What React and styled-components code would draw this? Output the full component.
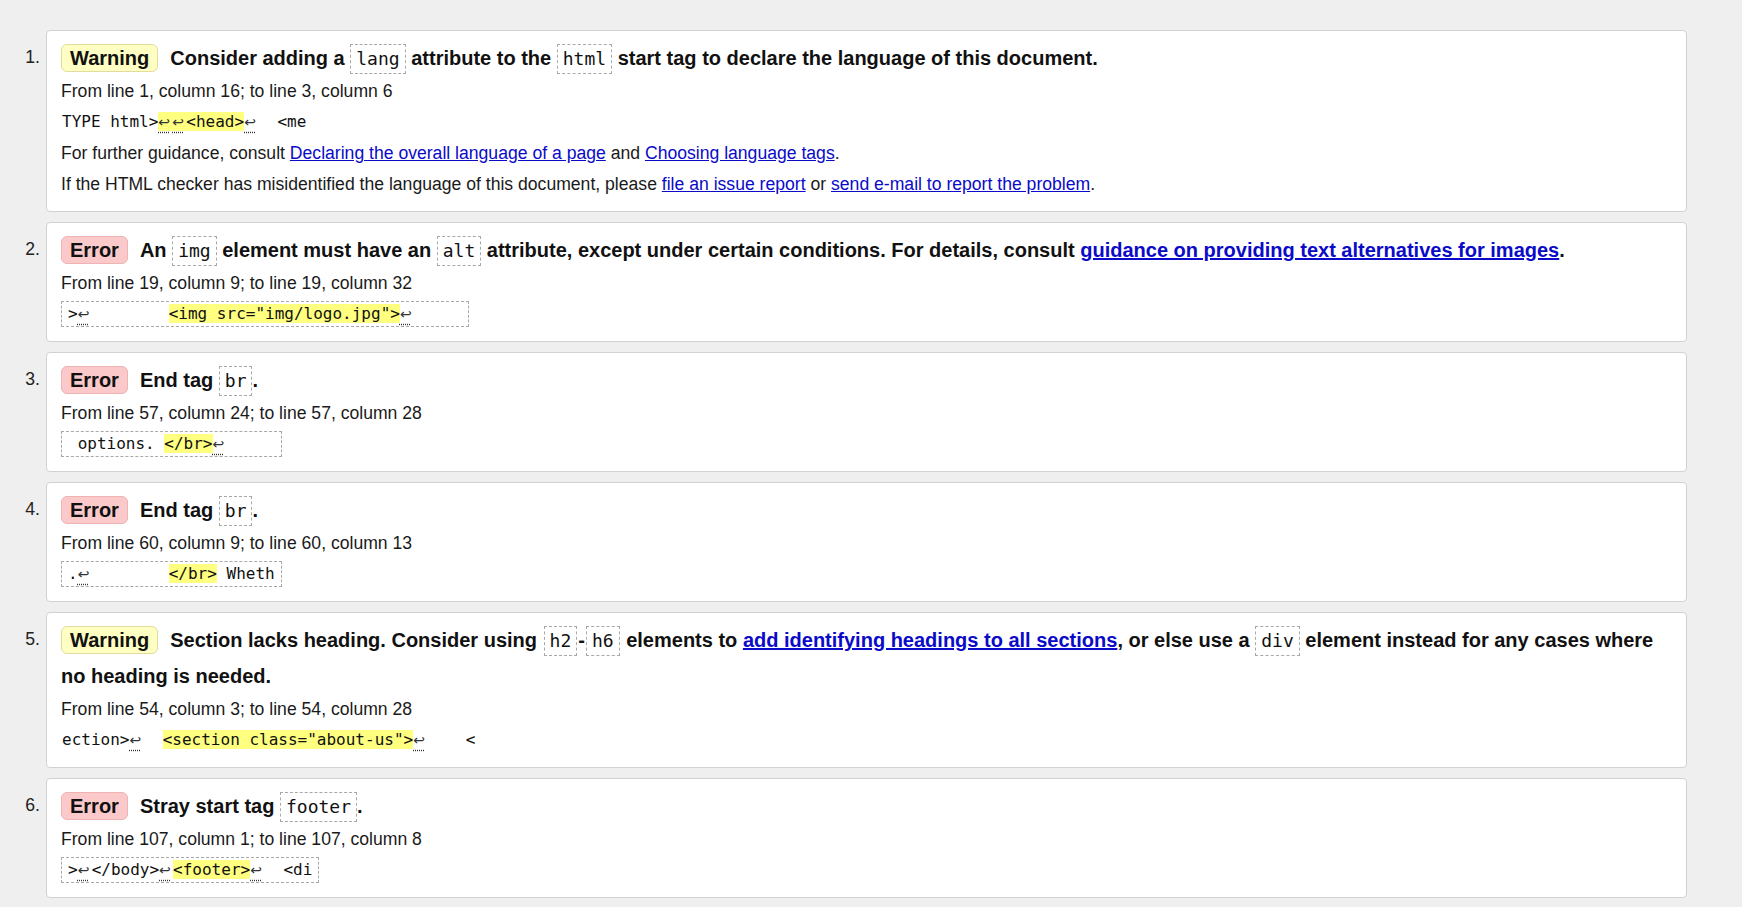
import React from 'react';
import styled, { createGlobalStyle, css } from 'styled-components';

const GlobalStyle = createGlobalStyle`
  html, body {
    margin: 0;
    padding: 0;
    overflow: hidden;
  }
  body {
    background-color: #efefef;
    font-family: "Liberation Sans", Arial, sans-serif;
    color: #1a1a1a;
  }
`;

const Page = styled.div`
  height: 100vh;
  overflow: hidden;
`;

const Messages = styled.ol`
  list-style: none;
  margin: 0;
  padding: 30px 55px 0 0;
  display: flex;
  flex-direction: column;
  gap: 10px;
`;

const Item = styled.li`
  display: flex;
  align-items: flex-start;
`;

const Num = styled.span`
  flex: 0 0 46px;
  box-sizing: border-box;
  padding: 9px 6px 0 0;
  text-align: right;
  font-size: 17.6px;
  line-height: 36px;
  color: #222;
`;

const Card = styled.div`
  flex: 1;
  background-color: #fff;
  border: 1px solid #d2d2d2;
  border-radius: 4px;
  padding: 9px 14px 14px;
`;

const Heading = styled.p`
  margin: 0;
  font-size: 20px;
  font-weight: bold;
  line-height: 36px;
  color: #111;
`;

const badgeColors = {
  warning: css`
    background-color: #ffffc4;
    border-color: #e3dc9e;
  `,
  error: css`
    background-color: #fbc9c9;
    border-color: #eeb3b3;
  `,
};

const Badge = styled.span`
  display: inline-block;
  padding: 0 8px;
  margin-right: 12px;
  line-height: 26px;
  border: 1px solid;
  border-radius: 6px;
  ${({ $type }) => badgeColors[$type]}
`;

const Code = styled.code`
  display: inline-block;
  font-family: "DejaVu Sans Mono", monospace;
  font-weight: normal;
  font-size: 18px;
  line-height: 24px;
  padding: 2px 5px;
  margin: 0 ${({ $tight }) => ($tight ? '1px' : '0')};
  border: 1px dashed #a8a8a8;
  color: #111;
`;

const Details = styled.div`
  display: flex;
  flex-direction: column;
  align-items: flex-start;
  gap: 5px;
  margin-top: 2px;
`;

const Line = styled.p`
  margin: 0;
  font-size: 17.6px;
  line-height: 26px;
  color: #1a1a1a;
`;

const Extract = styled.p`
  margin: 0;
  font-family: "DejaVu Sans Mono", monospace;
  font-size: 16px;
  line-height: 24px;
  white-space: pre;
  color: #111;
  border: 1px dashed ${({ $boxed }) => ($boxed ? '#a8a8a8' : 'transparent')};
  padding: 0 ${({ $boxed }) => ($boxed ? '6px' : '0')};
`;

const Hl = styled.span`
  background-color: #ffff80;
`;

const Lf = styled.span`
  display: inline-block;
  width: 14px;
  font-family: "DejaVu Sans", sans-serif;
  font-size: 14px;
  line-height: 18px;
  color: #333;
  text-decoration: underline dotted #333;
  text-underline-offset: 5px;
`;

const Link = styled.a`
  color: #0a0ac8;
  text-decoration: underline;
`;

const lf = <Lf>↩</Lf>;

export default function App() {
  return (
    <Page>
      <GlobalStyle />
      <Messages>
        <Item>
          <Num>1.</Num>
          <Card>
            <Heading>
              <Badge $type="warning">Warning</Badge>
              Consider adding a <Code>lang</Code> attribute to the <Code>html</Code> start tag to
              declare the language of this document.
            </Heading>
            <Details>
              <Line>From line 1, column 16; to line 3, column 6</Line>
              <Extract>
                TYPE html&gt;<Hl>{lf}{lf}&lt;head&gt;</Hl>{lf}{'  <me'}
              </Extract>
              <Line>
                For further guidance, consult{' '}
                <Link href="#">Declaring the overall language of a page</Link> and{' '}
                <Link href="#">Choosing language tags</Link>.
              </Line>
              <Line>
                If the HTML checker has misidentified the language of this document, please{' '}
                <Link href="#">file an issue report</Link> or{' '}
                <Link href="#">send e-mail to report the problem</Link>.
              </Line>
            </Details>
          </Card>
        </Item>

        <Item>
          <Num>2.</Num>
          <Card>
            <Heading>
              <Badge $type="error">Error</Badge>
              An <Code>img</Code> element must have an <Code>alt</Code> attribute, except under
              certain conditions. For details, consult{' '}
              <Link href="#">guidance on providing text alternatives for images</Link>.
            </Heading>
            <Details>
              <Line>From line 19, column 9; to line 19, column 32</Line>
              <Extract $boxed>
                &gt;{lf}{'        '}<Hl>&lt;img src="img/logo.jpg"&gt;</Hl>{lf}{'     '}
              </Extract>
            </Details>
          </Card>
        </Item>

        <Item>
          <Num>3.</Num>
          <Card>
            <Heading>
              <Badge $type="error">Error</Badge>
              End tag <Code>br</Code>.
            </Heading>
            <Details>
              <Line>From line 57, column 24; to line 57, column 28</Line>
              <Extract $boxed>
                {' options. '}<Hl>&lt;/br&gt;</Hl>{lf}{'     '}
              </Extract>
            </Details>
          </Card>
        </Item>

        <Item>
          <Num>4.</Num>
          <Card>
            <Heading>
              <Badge $type="error">Error</Badge>
              End tag <Code>br</Code>.
            </Heading>
            <Details>
              <Line>From line 60, column 9; to line 60, column 13</Line>
              <Extract $boxed>
                .{lf}{'        '}<Hl>&lt;/br&gt;</Hl>{' Wheth'}
              </Extract>
            </Details>
          </Card>
        </Item>

        <Item>
          <Num>5.</Num>
          <Card>
            <Heading>
              <Badge $type="warning">Warning</Badge>
              Section lacks heading. Consider using <Code $tight>h2</Code>-<Code $tight>h6</Code>{' '}
              elements to <Link href="#">add identifying headings to all sections</Link>, or else
              use a <Code>div</Code> element instead for any cases where no heading is needed.
            </Heading>
            <Details>
              <Line>From line 54, column 3; to line 54, column 28</Line>
              <Extract>
                ection&gt;{lf}{'  '}<Hl>&lt;section class="about-us"&gt;</Hl>{lf}{'    <'}
              </Extract>
            </Details>
          </Card>
        </Item>

        <Item>
          <Num>6.</Num>
          <Card>
            <Heading>
              <Badge $type="error">Error</Badge>
              Stray start tag <Code>footer</Code>.
            </Heading>
            <Details>
              <Line>From line 107, column 1; to line 107, column 8</Line>
              <Extract $boxed>
                &gt;{lf}&lt;/body&gt;{lf}<Hl>&lt;footer&gt;</Hl>{lf}{'  <di'}
              </Extract>
            </Details>
          </Card>
        </Item>

        <Item>
          <Num>7.</Num>
          <Card>
            <Heading>
              <Badge $type="error">Error</Badge>
              Stray end tag <Code>footer</Code>.
            </Heading>
            <Details>
              <Line>From line 120, column 1; to line 120, column 9</Line>
            </Details>
          </Card>
        </Item>
      </Messages>
    </Page>
  );
}
